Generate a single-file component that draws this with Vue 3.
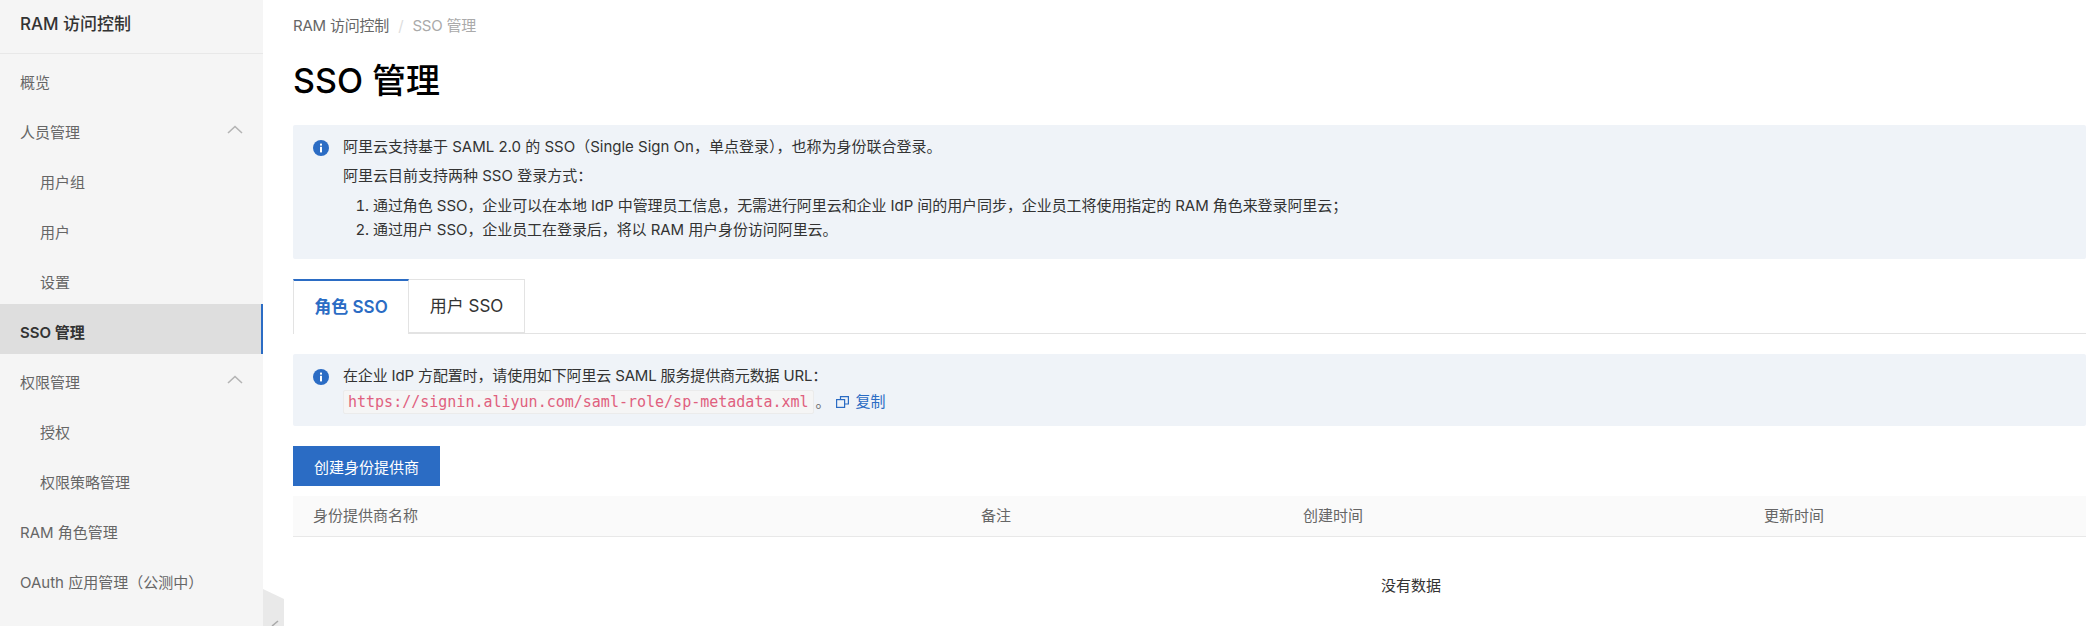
<template>
  <div class="layout">
    <aside class="sidebar">
      <div class="side-title">RAM 访问控制</div>
      <nav>
        <div
          v-for="item in menu"
          :key="item.label"
          class="menu-item"
          :class="{ sub: item.sub, active: item.active }"
        >
          <span>{{ item.label }}</span>
          <svg v-if="item.open" class="caret" width="16" height="9" viewBox="0 0 16 9">
            <path d="M1 8 L8 1.5 L15 8" fill="none" stroke="#b4b4b4" stroke-width="1.6" />
          </svg>
        </div>
      </nav>
    </aside>

    <!-- 折叠把手 -->
    <div class="collapse-handle">
      <svg width="22" height="37" viewBox="0 0 22 37">
        <path d="M0 0 L21 10 L21 37 L0 37 Z" fill="#e9e9e9" />
        <path d="M15 32 L9 37" fill="none" stroke="#aaa" stroke-width="1.6" />
      </svg>
    </div>

    <main class="main">
      <div class="breadcrumb">
        <span>RAM 访问控制</span>
        <i class="sep">/</i>
        <span class="current">SSO 管理</span>
      </div>
      <h1>SSO 管理</h1>

      <section class="notice intro">
        <svg class="info" width="16" height="16" viewBox="0 0 16 16">
          <circle cx="8" cy="8" r="8" fill="#2b6cc4" />
          <rect x="7" y="6.8" width="2" height="5.6" fill="#fff" />
          <rect x="7" y="3.6" width="2" height="2" fill="#fff" />
        </svg>
        <div class="notice-body">
          <p>阿里云支持基于 SAML 2.0 的 SSO（Single Sign On，单点登录），也称为身份联合登录。</p>
          <p>阿里云目前支持两种 SSO 登录方式：</p>
          <ol>
            <li>通过角色 SSO，企业可以在本地 IdP 中管理员工信息，无需进行阿里云和企业 IdP 间的用户同步，企业员工将使用指定的 RAM 角色来登录阿里云；</li>
            <li>通过用户 SSO，企业员工在登录后，将以 RAM 用户身份访问阿里云。</li>
          </ol>
        </div>
      </section>

      <div class="tabs">
        <div class="tab active">角色 SSO</div>
        <div class="tab">用户 SSO</div>
      </div>

      <section class="notice meta">
        <svg class="info" width="16" height="16" viewBox="0 0 16 16">
          <circle cx="8" cy="8" r="8" fill="#2b6cc4" />
          <rect x="7" y="6.8" width="2" height="5.6" fill="#fff" />
          <rect x="7" y="3.6" width="2" height="2" fill="#fff" />
        </svg>
        <div class="notice-body">
          <p class="url-title">在企业 IdP 方配置时，请使用如下阿里云 SAML 服务提供商元数据 URL：</p>
          <p class="url-line">
            <code>https://signin.aliyun.com/saml-role/sp-metadata.xml</code>
            <span class="dot">。</span>
            <a class="copy">
              <svg width="13" height="12" viewBox="0 0 13 12">
                <path d="M4.5 3.5 V0.6 H12.4 V8 H9" fill="none" stroke="#2b6cc4" stroke-width="1.2" />
                <rect x="0.6" y="3.6" width="8" height="7.8" fill="none" stroke="#2b6cc4" stroke-width="1.2" />
              </svg>
              复制
            </a>
          </p>
        </div>
      </section>

      <button class="primary">创建身份提供商</button>

      <div class="table">
        <div class="row head">
          <div v-for="col in columns" :key="col">{{ col }}</div>
        </div>
        <div class="empty">没有数据</div>
      </div>
    </main>
  </div>
</template>

<script setup>
const menu = [
  { label: '概览' },
  { label: '人员管理', open: true },
  { label: '用户组', sub: true },
  { label: '用户', sub: true },
  { label: '设置', sub: true },
  { label: 'SSO 管理', active: true },
  { label: '权限管理', open: true },
  { label: '授权', sub: true },
  { label: '权限策略管理', sub: true },
  { label: 'RAM 角色管理' },
  { label: 'OAuth 应用管理（公测中）' }
]

const columns = ['身份提供商名称', '备注', '创建时间', '更新时间']
</script>

<style>
html, body {
  margin: 0;
  height: 100%;
  overflow: hidden;
  background: #fff;
}
</style>

<style scoped>
.layout {
  position: relative;
  display: flex;
  height: 626px;
  overflow: hidden;
  font-family: Inter, "Noto Sans CJK SC", sans-serif;
  font-size: 15px;
  color: #333;
}

.sidebar {
  flex: 0 0 263px;
  background: #f5f5f5;
}
.side-title {
  height: 54px;
  box-sizing: border-box;
  line-height: 48px;
  padding-left: 20px;
  font-size: 17px;
  font-weight: 500;
  color: #333;
  border-bottom: 1px solid #e8e8e8;
}
.menu-item {
  display: flex;
  align-items: center;
  justify-content: space-between;
  height: 50px;
  padding: 5px 20px 0;
  color: #666;
  box-sizing: border-box;
}
.menu-item.sub {
  padding-left: 40px;
}
.menu-item.active {
  background: #dedede;
  color: #333;
  font-weight: 600;
  border-right: 2px solid #2b6cc4;
}
.caret {
  margin-top: -4px;
}

.collapse-handle {
  position: absolute;
  left: 263px;
  top: 589px;
  height: 37px;
}

.main {
  flex: 1;
  min-width: 0;
  padding: 0 0 0 30px;
  overflow: hidden;
}
.breadcrumb {
  height: 52px;
  line-height: 52px;
  color: #666;
  letter-spacing: -0.2px;
}
.breadcrumb .sep {
  margin: 0 9px;
  color: #ddd;
  font-style: normal;
}
.breadcrumb .current {
  color: #aaa;
}
h1 {
  margin: 0;
  height: 73px;
  line-height: 58px;
  font-size: 34px;
  font-weight: 500;
  color: #000;
}

.notice {
  display: flex;
  background: #eff3f8;
  border-radius: 2px;
  line-height: 24px;
  padding-left: 20px;
}
.notice p {
  margin: 0;
}
.notice .info {
  margin: 5px 14px 0 0;
  flex: none;
}
.intro {
  height: 134px;
  box-sizing: border-box;
  padding-top: 10px;
}
.intro p:nth-child(2) {
  margin-top: 5px;
}
.intro ol {
  margin: 6px 0 0;
  padding-left: 30px;
  letter-spacing: -0.07px;
}

.tabs {
  display: flex;
  height: 55px;
  margin-top: 20px;
  box-sizing: border-box;
  border-bottom: 1px solid #e3e3e3;
}
.tab {
  width: 116px;
  height: 54px;
  box-sizing: border-box;
  line-height: 53px;
  text-align: center;
  font-size: 17px;
  border: 1px solid #e3e3e3;
  border-left: none;
}
.tab.active {
  height: 55px;
  color: #2b6cc4;
  font-weight: 600;
  background: #fff;
  border-top: 2px solid #2b6cc4;
  border-left: 1px solid #e3e3e3;
  border-bottom: none;
}

.meta {
  height: 72px;
  margin-top: 20px;
  box-sizing: border-box;
  padding-top: 10px;
}
.url-title {
  letter-spacing: -0.15px;
}
.url-line {
  display: flex;
  align-items: center;
  height: 28px;
}
code {
  font-family: "DejaVu Sans Mono", monospace;
  font-size: 15px;
  line-height: 22px;
  color: #e0607e;
  background: #f5f5f5;
  border: 1px solid #ebebeb;
  border-radius: 2px;
  padding: 0 4px;
}
.dot {
  width: 20px;
  padding-left: 2px;
  color: #666;
}
.copy {
  display: inline-flex;
  align-items: center;
  gap: 7px;
  color: #2b6cc4;
}

.primary {
  display: block;
  width: 147px;
  height: 40px;
  margin-top: 20px;
  border: none;
  background: #2b6cc4;
  color: #fff;
  font: inherit;
}

.table {
  width: 2236px;
  margin-top: 10px;
}
.row {
  display: grid;
  grid-template-columns: 668px 322px 461px 1fr;
}
.head {
  height: 41px;
  box-sizing: border-box;
  line-height: 40px;
  background: #fafafa;
  border-bottom: 1px solid #e8e8e8;
  color: #666;
}
.head > div {
  padding-left: 20px;
}
.empty {
  height: 100px;
  line-height: 98px;
  text-align: center;
}
</style>
